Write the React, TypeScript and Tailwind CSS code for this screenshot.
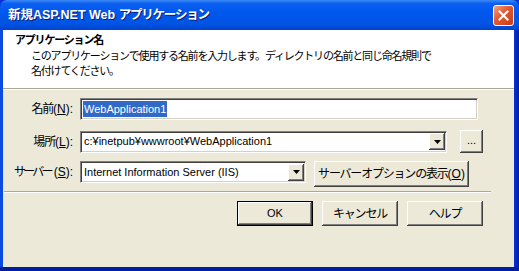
import React from 'react';

const jp = { fontFamily: '"Liberation Sans", "Noto Sans CJK JP", sans-serif' };

// Japanese glyphs in Noto are wider than the old UI font, so pull them together
function J({ children }: { children: React.ReactNode }) {
  return <span className="tracking-[-1.2px]">{children}</span>;
}

function DropArrow() {
  return (
    <div className="w-[16px] h-[17px] bg-[#ece9d8] flex items-center justify-center shadow-[inset_-1px_-1px_0_#404040,inset_1px_1px_0_#ffffff,inset_-2px_-2px_0_#808080]">
      <svg width="7" height="4" viewBox="0 0 7 4">
        <path d="M0 0h7L3.5 4z" fill="#000" />
      </svg>
    </div>
  );
}

function Sunken({ className, children }: { className: string; children?: React.ReactNode }) {
  return (
    <div
      className={
        'bg-white border border-t-[#808080] border-l-[#808080] border-r-white border-b-white shadow-[inset_1px_1px_0_#404040,inset_-1px_-1px_0_#d4d0c8] ' +
        className
      }
    >
      {children}
    </div>
  );
}

function Btn({ children, def, className }: { children: React.ReactNode; def?: boolean; className: string }) {
  return (
    <div
      className={
        'flex items-center justify-center whitespace-nowrap text-[11px] bg-[#ece9d8] shadow-[inset_-1px_-1px_0_#404040,inset_1px_1px_0_#ffffff,inset_-2px_-2px_0_#808080] ' +
        (def ? 'border border-black ' : '') +
        className
      }
    >
      {children}
    </div>
  );
}

export default function App() {
  return (
    <div className="w-[519px] h-[271px] flex flex-col bg-[#0831d9] text-black" style={jp}>
      {/* Title bar */}
      <div className="h-[30px] shrink-0 flex items-center pl-[8px] pr-[5px] bg-[linear-gradient(#3d8af7_0%,#0a5ff0_12%,#0058ee_40%,#0054e3_80%,#0043cf_100%)] rounded-t-[7px]">
        <div className="text-white font-bold text-[12.5px] leading-none [text-shadow:1px_1px_0_#0a1e7a] whitespace-nowrap">
          新規ASP.NET Web <J>アプリケーション</J>
        </div>
        <div className="ml-auto w-[21px] h-[21px] rounded-[3px] border border-white bg-[linear-gradient(135deg,#f1a088_0%,#e2572d_45%,#c73e17_100%)] flex items-center justify-center">
          <svg width="11" height="11" viewBox="0 0 11 11">
            <path d="M1.5 1.5l8 8M9.5 1.5l-8 8" stroke="#fff" strokeWidth="2.2" strokeLinecap="square" />
          </svg>
        </div>
      </div>

      <div className="flex flex-1">
        <div className="w-[3px] bg-[#0a4be0]" />
        <div className="flex-1 flex flex-col bg-[#ece9d8]">
          {/* Header */}
          <div className="h-[59px] bg-white border-b border-[#aca899] shadow-[0_1px_0_#ffffff] pt-[3px] text-[11px] leading-[15px] whitespace-nowrap">
            <div className="pl-[12px] font-bold">
              <J>アプリケーション名</J>
            </div>
            <div className="pl-[28px] mt-[1px]">
              <J>このアプリケーションで使用する名前を入力します。ディレクトリの名前と同じ命名規則で</J>
              <br />
              <J>名付けてください。</J>
            </div>
          </div>

          {/* Fields */}
          <div className="flex flex-col text-[11px] pt-[9px]">
            <div className="flex items-center h-[22px]">
              <div className="w-[70px] text-right whitespace-nowrap text-[12px]">
                <J>名前</J>(<span className="underline">N</span>):
              </div>
              <Sunken className="ml-[7px] w-[398px] h-[22px] flex items-center pl-[2px]">
                <span className="bg-[#316ac5] text-white px-[1px] leading-[16px]">WebApplication1</span>
              </Sunken>
            </div>

            <div className="flex items-center h-[23px] mt-[10px]">
              <div className="w-[70px] text-right whitespace-nowrap text-[12px]">
                <J>場所</J>(<span className="underline">L</span>):
              </div>
              <Sunken className="ml-[7px] w-[367px] h-[22px] flex items-center pl-[3px] pr-[1px]">
                <span className="flex-1">c:¥inetpub¥wwwroot¥WebApplication1</span>
                <DropArrow />
              </Sunken>
              <Btn className="ml-[13px] w-[23px] h-[23px] pb-[3px]">...</Btn>
            </div>

            <div className="flex items-start h-[26px] mt-[8px]">
              <div className="w-[70px] text-right h-[22px] flex items-center justify-end whitespace-nowrap text-[12px]">
                <span className="tracking-[-2.8px] mr-[3px]">サーバー</span>(<span className="underline">S</span>):
              </div>
              <Sunken className="ml-[7px] w-[226px] h-[22px] flex items-center pl-[3px] pr-[1px]">
                <span className="flex-1">Internet Information Server (IIS)</span>
                <DropArrow />
              </Sunken>
              <Btn className="ml-[8px] w-[155px] h-[26px] text-[12px]">
                <J>サーバーオプションの表示</J>(<span className="underline">O</span>)
              </Btn>
            </div>

            {/* Separator */}
            <div className="ml-[1px] w-[487px] mt-[4px] border-t border-[#aca899] border-b border-b-white" />

            {/* Buttons */}
            <div className="flex mt-[8px] pl-[234px] gap-[9px]">
              <Btn def className="w-[76px] h-[25px]">OK</Btn>
              <Btn className="w-[76px] h-[25px] text-[12px]">
                <J>キャンセル</J>
              </Btn>
              <Btn className="w-[76px] h-[25px] text-[12px]">
                <J>ヘルプ</J>
              </Btn>
            </div>
          </div>
        </div>
        <div className="w-[5px] bg-[linear-gradient(90deg,#0831d9,#001ea0)]" />
      </div>
      <div className="h-[4px] bg-[#001ea0]" />
    </div>
  );
}
